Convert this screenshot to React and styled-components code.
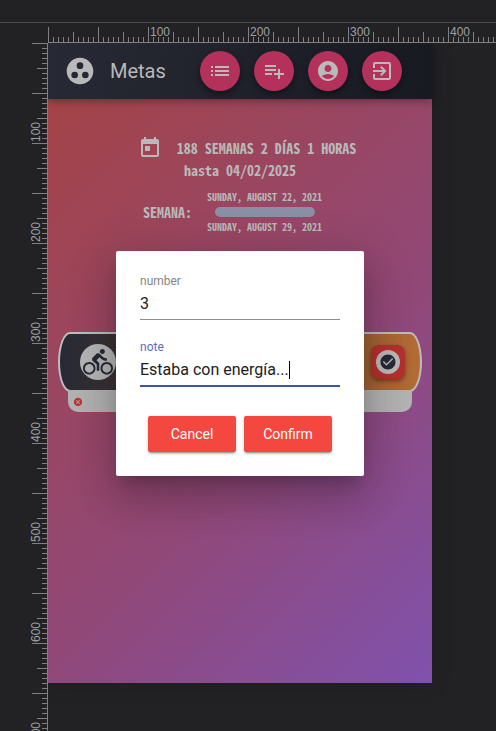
import React, { useState } from "react";
import styled, { createGlobalStyle } from "styled-components";
import {
  MdGroupWork,
  MdList,
  MdPlaylistAdd,
  MdAccountCircle,
  MdExitToApp,
  MdToday,
  MdDirectionsBike,
  MdCheckCircle,
  MdCancel,
} from "react-icons/md";

const GlobalStyle = createGlobalStyle`
  *, *::before, *::after { box-sizing: border-box; }
  body {
    margin: 0;
    background: #222224;
    font-family: Roboto, "Liberation Sans", sans-serif;
  }
  button, input { font: inherit; }
`;

const Viewer = styled.div`
  display: grid;
  grid-template-columns: 48px minmax(0, 1fr);
  grid-template-rows: 23px 20px minmax(0, 1fr);
  height: 100vh;
  overflow: hidden;
`;

const TopStrip = styled.div`
  grid-column: 1 / -1;
  border-bottom: 1px solid #4a4a4d;
`;

const tick = "#808082";

const HorizontalRuler = styled.div`
  grid-column: 2;
  display: flex;
  overflow: hidden;
  border-bottom: 1px solid ${tick};
  background:
    repeating-linear-gradient(to right, ${tick} 0 1px, transparent 1px 50px) 0 100% / 100% 15px no-repeat,
    repeating-linear-gradient(to right, ${tick} 0 1px, transparent 1px 25px) 0 100% / 100% 10px no-repeat,
    repeating-linear-gradient(to right, ${tick} 0 1px, transparent 1px 5px) 0 100% / 100% 5px no-repeat;
`;

const VerticalRuler = styled.div`
  grid-column: 1;
  display: flex;
  flex-direction: column;
  overflow: hidden;
  border-right: 1px solid ${tick};
  background:
    repeating-linear-gradient(to bottom, ${tick} 0 1px, transparent 1px 50px) 100% 0 / 15px 100% no-repeat,
    repeating-linear-gradient(to bottom, ${tick} 0 1px, transparent 1px 25px) 100% 0 / 10px 100% no-repeat,
    repeating-linear-gradient(to bottom, ${tick} 0 1px, transparent 1px 5px) 100% 0 / 5px 100% no-repeat;
`;

const RulerMark = styled.span`
  flex: none;
  width: 100px;
  padding: 2px 0 0 2px;
  color: #9aa0a6;
  font: 12px/14px "Liberation Sans", Arial, sans-serif;
`;

const VerticalMark = styled(RulerMark)`
  width: auto;
  height: 100px;
  padding: 1px 29px 0 0;
  writing-mode: vertical-rl;
  transform: rotate(180deg);
`;

const Stage = styled.div`
  overflow: hidden;
`;

const Device = styled.main`
  position: relative;
  display: flex;
  flex-direction: column;
  max-width: 384px;
  min-height: 640px;
  background: linear-gradient(135deg, #a64343 0%, #914877 60%, #8052ad 100%);
  box-shadow: 0 0 20px rgba(0, 0, 0, 0.15);
  color: #b9b9b9;
`;

const AppBar = styled.header`
  display: flex;
  align-items: center;
  height: 56px;
  padding: 0 30px 0 16px;
  background: linear-gradient(100deg, #272934, #181a22);
  box-shadow: 0 2px 8px rgba(0, 0, 0, 0.35);
`;

const Title = styled.h1`
  flex: 1;
  margin: 0 0 0 14px;
  font-size: 20px;
  line-height: 24px;
  font-weight: 400;
`;

const Actions = styled.nav`
  display: flex;
  gap: 14px;
`;

const RoundButton = styled.button`
  display: grid;
  place-items: center;
  width: 40px;
  height: 40px;
  padding: 0;
  border: 0;
  border-radius: 50%;
  background: #b4315c;
  color: #bababa;
  box-shadow: 0 3px 6px rgba(0, 0, 0, 0.4);
`;

const Countdown = styled.section`
  display: flex;
  flex-direction: column;
  align-items: center;
  padding-top: 37px;
  font-family: "Noto Sans Mono CJK JP", "DejaVu Sans Mono", monospace;
  font-weight: 700;
  font-size: 14px;
  line-height: 20px;
`;

const Remaining = styled.div`
  display: flex;
  align-items: center;
  gap: 15px;
  padding-left: 14px;
`;

const Week = styled.div`
  display: flex;
  align-items: center;
  gap: 15px;
  margin-top: 7px;
  padding-right: 15px;
`;

const WeekRange = styled.div`
  display: flex;
  flex-direction: column;
  align-items: center;
  font-size: 10px;
`;

const WeekProgress = styled.div`
  width: 100px;
  height: 10px;
  border-radius: 5px;
  background: #8b8fa6;
`;

const Goal = styled.article`
  margin: 95px 10px 0;
`;

const GoalHead = styled.div`
  display: flex;
  align-items: center;
  justify-content: space-between;
  height: 60px;
  padding: 0 15px 0 20px;
  border: 2px solid #bdbdbd;
  border-radius: 12px / 30px;
  background: linear-gradient(to right, #262935, #b46c34);
`;

const Sport = styled.span`
  display: grid;
  place-items: center;
  width: 36px;
  height: 36px;
  border-radius: 50%;
  background: #b6b6b6;
  color: #262a36;
`;

const DoneButton = styled.button`
  display: grid;
  place-items: center;
  width: 34px;
  height: 34px;
  padding: 0;
  border: 0;
  border-radius: 8px;
  background: #b5302c;
  color: #262a36;
  box-shadow: 0 2px 4px rgba(0, 0, 0, 0.4);
`;

const DoneMark = styled.span`
  display: grid;
  place-items: center;
  width: 24px;
  height: 24px;
  border-radius: 50%;
  background: #b9b9b9;
`;

const GoalLog = styled.div`
  display: flex;
  align-items: center;
  height: 22px;
  margin: -2px 10px 0;
  padding: 2px 5px 0;
  border-radius: 0 0 10px 10px;
  background: #b2b2b2;
  color: #bd3630;
`;

const Overlay = styled.div`
  position: absolute;
  inset: 0;
  display: flex;
  align-items: center;
  justify-content: center;
`;

const Dialog = styled.form`
  width: 248px;
  padding: 24px;
  border-radius: 2px;
  background: #fff;
  box-shadow:
    0 11px 15px -7px rgba(0, 0, 0, 0.2),
    0 24px 38px 3px rgba(0, 0, 0, 0.14),
    0 9px 46px 8px rgba(0, 0, 0, 0.12);
`;

const Field = styled.div`
  display: flex;
  flex-direction: column;
  gap: 7px;
  margin-bottom: ${(p) => (p.$active ? "29px" : "21px")};
  border-bottom: ${(p) => (p.$active ? "2px solid #3f51b5" : "1px solid #8d8d8d")};
`;

const Label = styled.label`
  color: ${(p) => (p.$active ? "#5c6bc0" : "#858585")};
  font-size: 12px;
  line-height: 12px;
`;

const Entry = styled.div`
  display: flex;
  align-items: center;
  padding-bottom: 5px;
`;

const Input = styled.input`
  field-sizing: content;
  min-width: 0;
  height: 20px;
  padding: 0;
  border: 0;
  outline: 0;
  background: transparent;
  color: #212121;
  font-size: 16px;
  line-height: 20px;
`;

const Caret = styled.span`
  width: 1px;
  height: 18px;
  background: #000;
`;

const Buttons = styled.div`
  display: flex;
  justify-content: center;
  gap: 8px;
`;

const RaisedButton = styled.button`
  width: 88px;
  height: 36px;
  padding: 0;
  border: 0;
  border-radius: 2px;
  background: #f44740;
  color: #fff;
  font-size: 14px;
  box-shadow:
    0 3px 1px -2px rgba(0, 0, 0, 0.2),
    0 2px 2px rgba(0, 0, 0, 0.14),
    0 1px 5px rgba(0, 0, 0, 0.12);
`;

const actions = [
  { label: "Lista", Icon: MdList },
  { label: "Agregar", Icon: MdPlaylistAdd },
  { label: "Cuenta", Icon: MdAccountCircle },
  { label: "Salir", Icon: MdExitToApp },
];

const columnMarks = [100, 200, 300, 400];
const rowMarks = [100, 200, 300, 400, 500, 600, 700];

export default function App() {
  const [number, setNumber] = useState("3");
  const [note, setNote] = useState("Estaba con energía...");

  return (
    <>
      <GlobalStyle />
      <Viewer>
        <TopStrip />
        <HorizontalRuler>
          <RulerMark />
          {columnMarks.map((m) => (
            <RulerMark key={m}>{m}</RulerMark>
          ))}
        </HorizontalRuler>
        <VerticalRuler>
          {rowMarks.map((m) => (
            <VerticalMark key={m}>{m}</VerticalMark>
          ))}
        </VerticalRuler>
        <Stage>
          <Device>
            <AppBar>
              <MdGroupWork size={32} />
              <Title>Metas</Title>
              <Actions>
                {actions.map(({ label, Icon }) => (
                  <RoundButton key={label} type="button" aria-label={label}>
                    <Icon size={24} />
                  </RoundButton>
                ))}
              </Actions>
            </AppBar>

            <Countdown>
              <Remaining>
                <MdToday size={24} />
                <span>188 SEMANAS 2 DÍAS 1 HORAS</span>
              </Remaining>
              <span>hasta 04/02/2025</span>
              <Week>
                <span>SEMANA:</span>
                <WeekRange>
                  <span>SUNDAY, AUGUST 22, 2021</span>
                  <WeekProgress />
                  <span>SUNDAY, AUGUST 29, 2021</span>
                </WeekRange>
              </Week>
            </Countdown>

            <Goal>
              <GoalHead>
                <Sport>
                  <MdDirectionsBike size={30} />
                </Sport>
                <DoneButton type="button" aria-label="Completar">
                  <DoneMark>
                    <MdCheckCircle size={18} />
                  </DoneMark>
                </DoneButton>
              </GoalHead>
              <GoalLog>
                <MdCancel size={10} />
              </GoalLog>
            </Goal>

            <Overlay>
              <Dialog role="dialog" aria-modal="true" onSubmit={(e) => e.preventDefault()}>
                <Field>
                  <Label htmlFor="number">number</Label>
                  <Entry>
                    <Input id="number" value={number} onChange={(e) => setNumber(e.target.value)} />
                  </Entry>
                </Field>
                <Field $active>
                  <Label htmlFor="note" $active>
                    note
                  </Label>
                  <Entry>
                    <Input id="note" value={note} onChange={(e) => setNote(e.target.value)} />
                    <Caret />
                  </Entry>
                </Field>
                <Buttons>
                  <RaisedButton type="button">Cancel</RaisedButton>
                  <RaisedButton type="submit">Confirm</RaisedButton>
                </Buttons>
              </Dialog>
            </Overlay>
          </Device>
        </Stage>
      </Viewer>
    </>
  );
}
